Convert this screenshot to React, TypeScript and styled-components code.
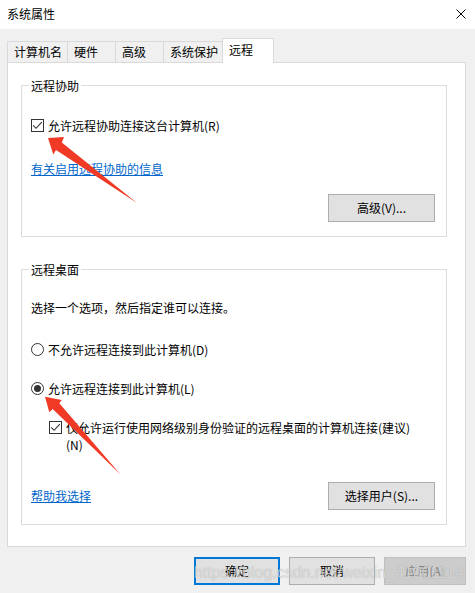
import React from 'react';
import styled, { createGlobalStyle } from 'styled-components';

const GlobalStyle = createGlobalStyle`
  html, body { margin: 0; padding: 0; background: #f0f0f0; }
  body {
    font-family: "Noto Sans CJK SC", "Microsoft YaHei UI", sans-serif;
    font-size: 12px;
    color: #000;
  }
  * { box-sizing: border-box; }
`;

const Window = styled.div`
  position: relative;
  width: 475px;
  height: 593px;
  background: #f0f0f0;
  overflow: hidden;
  display: flex;
  flex-direction: column;
`;

const TitleBar = styled.div`
  height: 29px;
  flex: none;
  background: #fff;
  display: flex;
  align-items: center;
  justify-content: space-between;
  padding: 0 9px 1px 7px;
  line-height: 16px;
`;

const Body = styled.div`
  padding: 9px 9px 0 7px;
`;

const TabStrip = styled.div`
  display: flex;
  align-items: flex-end;
  height: 24px;
`;

const Tab = styled.div<{ $w: number; $active?: boolean }>`
  position: relative;
  z-index: ${(p) => (p.$active ? 2 : 1)};
  width: ${(p) => p.$w}px;
  height: ${(p) => (p.$active ? 25 : 21)}px;
  margin-right: -1px;
  margin-bottom: ${(p) => (p.$active ? -1 : 0)}px;
  border: 1px solid #d9d9d9;
  border-bottom: none;
  background: ${(p) => (p.$active ? '#fff' : '#f0f0f0')};
  display: flex;
  align-items: center;
  padding: 0 0 ${(p) => (p.$active ? 2 : 1)}px 6px;
  line-height: 16px;
  white-space: nowrap;
`;

const Panel = styled.div`
  height: 485px;
  background: #fff;
  border: 1px solid #d9d9d9;
  padding: 22px 18px 0 13px;
`;

const Group = styled.div<{ $mt?: number }>`
  margin-top: ${(p) => p.$mt ?? 0}px;
  border: 1px solid #dcdcdc;
  padding: 0 11px 14px 9px;
  display: flex;
  flex-direction: column;
`;

const Legend = styled.div`
  margin: -8px 0 0 -2px;
  padding: 0 2px;
  width: fit-content;
  background: #fff;
  line-height: 16px;
`;

const Line = styled.div<{ $mt: number; $indent?: number }>`
  margin-top: ${(p) => p.$mt}px;
  margin-left: ${(p) => p.$indent ?? 0}px;
  display: flex;
  align-items: flex-start;
  line-height: 16px;
`;

const Label = styled.span<{ $maxW?: number }>`
  margin-left: 4px;
  line-height: 17px;
  max-width: ${(p) => (p.$maxW ? `${p.$maxW}px` : 'none')};
`;

const CheckBox = styled.span`
  flex: none;
  width: 13px;
  height: 13px;
  margin-top: 2px;
  border: 1px solid #333;
  background: #fff;
  display: inline-flex;
  align-items: center;
  justify-content: center;
`;

const RadioCircle = styled.span`
  flex: none;
  width: 13px;
  height: 13px;
  margin-top: 2px;
  border: 1px solid #333;
  border-radius: 50%;
  background: #fff;
  display: inline-flex;
  align-items: center;
  justify-content: center;
`;

const RadioDot = styled.span`
  width: 7px;
  height: 7px;
  border-radius: 50%;
  background: #333;
`;

const Link = styled.a<{ $mt?: number }>`
  margin-top: ${(p) => p.$mt ?? 0}px;
  color: #0066cc;
  text-decoration: underline;
  line-height: 16px;
  width: fit-content;
  cursor: pointer;
`;

const ActionRow = styled.div<{ $mt: number }>`
  margin-top: ${(p) => p.$mt}px;
  display: flex;
  align-items: center;
  justify-content: space-between;
`;

const Button = styled.button<{ $w: number; $primary?: boolean }>`
  width: ${(p) => p.$w}px;
  height: 28px;
  margin: 0;
  padding: 0;
  font: inherit;
  line-height: 16px;
  color: #000;
  background: #e1e1e1;
  border: ${(p) => (p.$primary ? '2px solid #0078d7' : '1px solid #adadad')};
  &:disabled {
    background: #cccccc;
    border-color: #bfbfbf;
    color: #838383;
  }
`;

const Footer = styled.div`
  display: flex;
  justify-content: flex-end;
  gap: 9px;
  margin-top: 10px;
  padding-right: 9px;
`;

const Spacer = styled.div`
  flex: 1;
`;

const Watermark = styled.div`
  position: absolute;
  left: 194px;
  top: 563px;
  font-family: "Liberation Sans", Arial, sans-serif;
  font-size: 16px;
  line-height: 20px;
  color: rgba(255, 255, 255, 0.55);
  text-shadow: 0 0 1px rgba(120, 120, 120, 0.6);
  white-space: nowrap;
  pointer-events: none;
`;

const Overlay = styled.svg`
  position: absolute;
  left: 0;
  top: 0;
  pointer-events: none;
`;

const Check = () => (
  <svg width="11" height="11" viewBox="0 0 11 11">
    <path d="M1.2 5.4 L4.1 8.3 L9.8 2.2" fill="none" stroke="#333" strokeWidth="1.1" />
  </svg>
);

const tabs = [
  { t: '计算机名', w: 61 },
  { t: '硬件', w: 49 },
  { t: '高级', w: 49 },
  { t: '系统保护', w: 60 },
  { t: '远程', w: 52, active: true },
];

export default function App() {
  return (
    <>
      <GlobalStyle />
      <Window>
        <TitleBar>
          <span>系统属性</span>
          <svg width="10" height="10" viewBox="0 0 10 10">
            <path d="M0.5 0.5 L9.5 9.5 M9.5 0.5 L0.5 9.5" stroke="#000" strokeWidth="1" />
          </svg>
        </TitleBar>
        <Body>
          <TabStrip>
            {tabs.map((tb) => (
              <Tab key={tb.t} $w={tb.w} $active={tb.active}>
                {tb.t}
              </Tab>
            ))}
          </TabStrip>
          <Panel>
            <Group>
              <Legend>远程协助</Legend>
              <Line $mt={23}>
                <CheckBox>
                  <Check />
                </CheckBox>
                <Label>允许远程协助连接这台计算机(R)</Label>
              </Line>
              <Link $mt={27}>有关启用远程协助的信息</Link>
              <ActionRow $mt={17}>
                <Spacer />
                <Button $w={107}>高级(V)...</Button>
              </ActionRow>
            </Group>
            <Group $mt={32}>
              <Legend>远程桌面</Legend>
              <Line $mt={22}>选择一个选项，然后指定谁可以连接。</Line>
              <Line $mt={25}>
                <RadioCircle />
                <Label>不允许远程连接到此计算机(D)</Label>
              </Line>
              <Line $mt={22}>
                <RadioCircle>
                  <RadioDot />
                </RadioCircle>
                <Label>允许远程连接到此计算机(L)</Label>
              </Line>
              <Line $mt={22} $indent={18}>
                <CheckBox>
                  <Check />
                </CheckBox>
                <Label $maxW={352}>仅允许运行使用网络级别身份验证的远程桌面的计算机连接(建议)(N)</Label>
              </Line>
              <ActionRow $mt={29}>
                <Link>帮助我选择</Link>
                <Button $w={107}>选择用户(S)...</Button>
              </ActionRow>
            </Group>
          </Panel>
        </Body>
        <Footer>
          <Button $w={86} $primary>
            确定
          </Button>
          <Button $w={86}>取消</Button>
          <Button $w={82} disabled>
            应用(A)
          </Button>
        </Footer>
        <Watermark>https://blog.csdn.net/weixin_41001114</Watermark>
        <Overlay width="475" height="593" viewBox="0 0 475 593">
          <polygon
            points="48,138 64,137 61.8,142.4 137,203 56,150 53.3,154.5"
            fill="#f03a26"
          />
          <polygon
            points="45,396.7 61.7,400 59.3,403.3 120.5,474.5 52.7,409 49.3,412.3"
            fill="#f03a26"
          />
        </Overlay>
      </Window>
    </>
  );
}
